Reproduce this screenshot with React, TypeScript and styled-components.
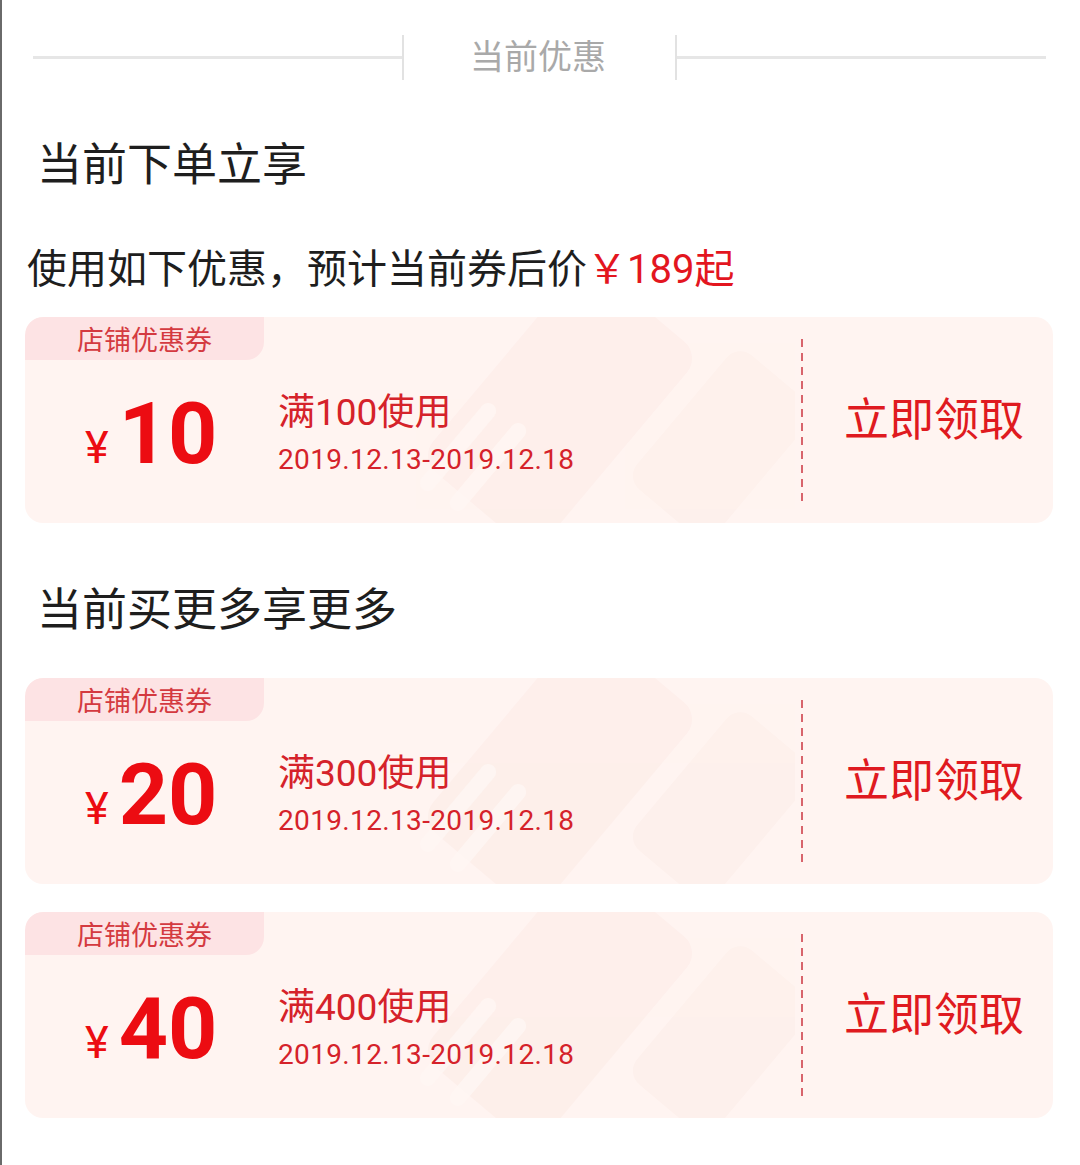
import styled, { createGlobalStyle } from 'styled-components';

const GlobalStyle = createGlobalStyle`
  html, body {
    margin: 0;
    padding: 0;
    background: #ffffff;
  }
  body {
    font-family: Roboto, "Noto Sans CJK SC", sans-serif;
  }
`;

const Page = styled.div`
  width: 1080px;
  min-height: 1165px;
  box-sizing: border-box;
  border-left: 2px solid #6a6a6a;
  display: flex;
  flex-direction: column;
  overflow: hidden;
`;

const Header = styled.div`
  display: flex;
  align-items: center;
  height: 45px;
  margin-top: 35px;
  padding: 0 34px 0 31px;
`;

const HeaderLine = styled.div`
  flex: 1;
  height: 3px;
  background: #e6e6e6;
`;

const HeaderTick = styled.div`
  width: 2px;
  height: 45px;
  background: #e2e2e2;
`;

const HeaderText = styled.div`
  padding: 0 69px 0 66px;
  font-size: 34px;
  line-height: 45px;
  color: #a9a9a9;
`;

const SectionTitle = styled.div<{ $top: number }>`
  margin-top: ${(p) => p.$top}px;
  padding-left: 35px;
  font-size: 45px;
  line-height: 60px;
  color: #1e1e1e;
`;

const Summary = styled.div`
  margin-top: 49px;
  padding-left: 25px;
  font-size: 40px;
  line-height: 50px;
  color: #1e1e1e;
`;

const SummaryPrice = styled.span`
  color: #e3161f;
`;

const Card = styled.div<{ $top: number }>`
  position: relative;
  margin: ${(p) => p.$top}px 27px 0 23px;
  height: 206px;
  border-radius: 18px;
  background: #fff4f1;
  display: flex;
  overflow: hidden;
`;

const Watermark = styled.svg`
  position: absolute;
  left: 350px;
  top: 0;
  width: 420px;
  height: 206px;
`;

const CardLeft = styled.div`
  position: relative;
  flex: 1;
  display: flex;
  flex-direction: column;
`;

const Tag = styled.div`
  align-self: flex-start;
  width: 239px;
  height: 43px;
  background: #fde3e4;
  border-radius: 18px 0 18px 0;
  display: flex;
  align-items: center;
  justify-content: center;
  font-size: 27px;
  color: #d43a40;
`;

const CardBody = styled.div`
  flex: 1;
  display: flex;
  align-items: center;
  padding: 0 0 16px 60px;
`;

const Amount = styled.div`
  width: 193px;
  display: flex;
  align-items: baseline;
  color: #ec0c12;
`;

const Yen = styled.span`
  font-size: 45px;
  margin-right: 10px;
`;

const AmountValue = styled.span`
  font-size: 86px;
  font-weight: 700;
  line-height: 1;
`;

const Info = styled.div`
  display: flex;
  flex-direction: column;
  gap: 8px;
  color: #d5222a;
`;

const Condition = styled.div`
  font-size: 37px;
  line-height: 44px;
`;

const Period = styled.div`
  font-size: 28px;
  line-height: 34px;
  letter-spacing: 0.35px;
`;

const Divider = styled.div`
  position: relative;
  align-self: center;
  width: 2px;
  height: 163px;
  background: repeating-linear-gradient(
    to bottom,
    #d8646c 0,
    #d8646c 8px,
    transparent 8px,
    transparent 14px
  );
`;

const Action = styled.div`
  position: relative;
  width: 250px;
  box-sizing: border-box;
  padding: 0 0 8px 41px;
  display: flex;
  align-items: center;
  font-size: 45px;
  color: #df1a20;
`;

type Coupon = {
  value: string;
  min: string;
};

function CouponCard({ coupon, top }: { coupon: Coupon; top: number }) {
  return (
    <Card $top={top}>
      <Watermark viewBox="0 0 420 206">
        <g fill="#fdebe6" opacity="0.55">
          <rect x="110" y="-40" width="150" height="260" rx="22" transform="rotate(40 185 90)" />
        </g>
        <g fill="#fdeee9" opacity="0.6">
          <rect x="295" y="40" width="105" height="175" rx="18" transform="rotate(40 347 127)" />
        </g>
        <g fill="#fff7f4" opacity="0.8">
          <rect x="75" y="75" width="16" height="110" rx="8" transform="rotate(40 83 130)" />
          <rect x="105" y="95" width="16" height="110" rx="8" transform="rotate(40 113 150)" />
        </g>
      </Watermark>
      <CardLeft>
        <Tag>店铺优惠券</Tag>
        <CardBody>
          <Amount>
            <Yen>¥</Yen>
            <AmountValue>{coupon.value}</AmountValue>
          </Amount>
          <Info>
            <Condition>满{coupon.min}使用</Condition>
            <Period>2019.12.13-2019.12.18</Period>
          </Info>
        </CardBody>
      </CardLeft>
      <Divider />
      <Action>立即领取</Action>
    </Card>
  );
}

export default function App() {
  return (
    <>
      <GlobalStyle />
      <Page>
        <Header>
          <HeaderLine />
          <HeaderTick />
          <HeaderText>当前优惠</HeaderText>
          <HeaderTick />
          <HeaderLine />
        </Header>
        <SectionTitle $top={56}>当前下单立享</SectionTitle>
        <Summary>
          使用如下优惠，预计当前券后价<SummaryPrice>￥189起</SummaryPrice>
        </Summary>
        <CouponCard top={22} coupon={{ value: '10', min: '100' }} />
        <SectionTitle $top={58}>当前买更多享更多</SectionTitle>
        <CouponCard top={37} coupon={{ value: '20', min: '300' }} />
        <CouponCard top={28} coupon={{ value: '40', min: '400' }} />
      </Page>
    </>
  );
}
